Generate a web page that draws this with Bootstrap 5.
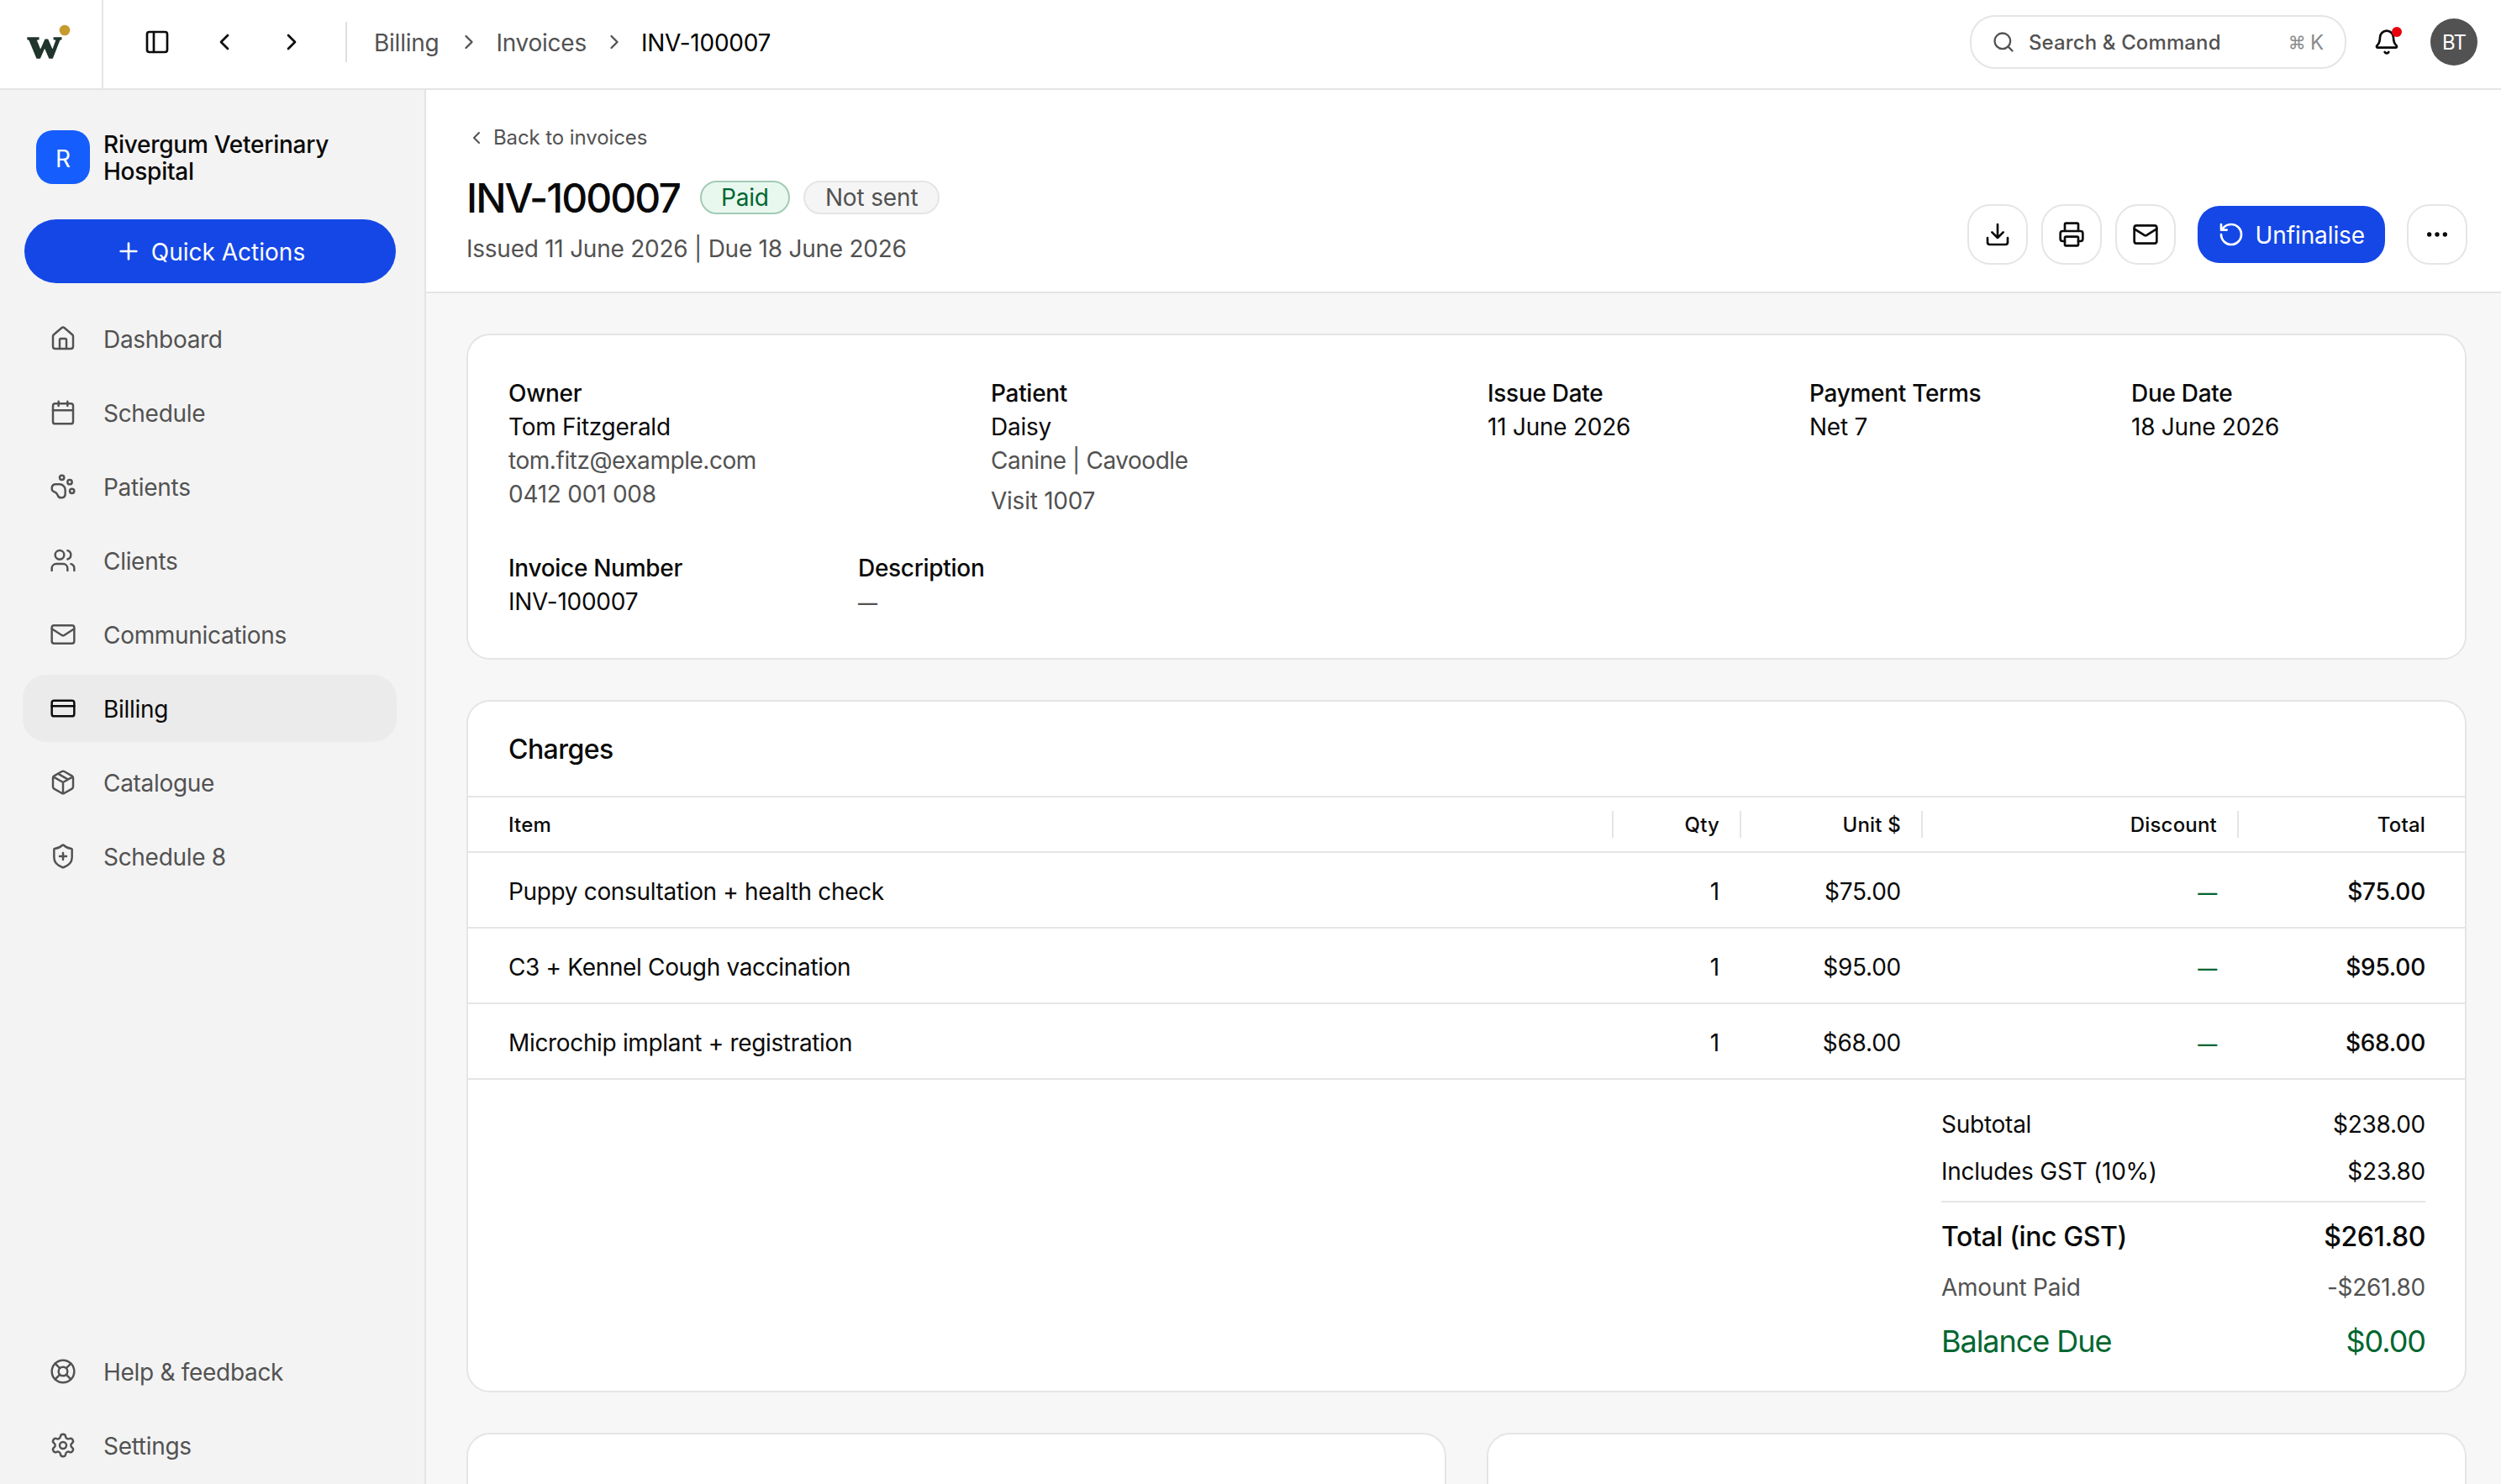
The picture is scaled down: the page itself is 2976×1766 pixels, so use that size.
<!DOCTYPE html>
<html lang="en">
<head>
<meta charset="utf-8">
<meta name="viewport" content="width=device-width, initial-scale=1">
<title>INV-100007</title>
<link rel="stylesheet" href="https://cdn.jsdelivr.net/npm/bootstrap@5.3.0/dist/css/bootstrap.min.css">
<script src="https://cdn.jsdelivr.net/npm/bootstrap@5.3.0/dist/js/bootstrap.bundle.min.js" defer></script>
<style>
:root{--ink:#0a0a0a;--soft:#525252;--line:#e5e5e5;--blue:#1447e6;--green:#016630}
body{font-family:Inter,"Liberation Sans",sans-serif;font-size:28px;line-height:40px;letter-spacing:-.25px;color:var(--ink);background:#f7f7f7}
a{color:inherit;text-decoration:none}
.fw-medium{font-weight:500!important;letter-spacing:-.3px}
.soft{color:var(--soft)}
.green{color:var(--green)}
.tight{letter-spacing:-.45px}
.dash{font-size:23px;font-weight:500;line-height:1}
.ic{width:32px;height:32px;flex:none;fill:none;stroke:currentColor;stroke-width:2;stroke-linecap:round;stroke-linejoin:round}
.ic-sm{width:28px;height:28px}
.ic-xs{width:24px;height:24px}

.topbar{height:107px;border-bottom:2px solid var(--line)}
.brand-cell{width:123px;border-right:2px solid var(--line)}
.brand-cell svg{width:120px;height:104px;display:block}
.tools{padding:0 28px 5px 48px}
.nav-tools{gap:48px}
.crumb-rule{width:2px;height:48px;background:#dedede;margin-left:48px;margin-right:32px}
.crumbs{padding-top:2px}
.crumbs .ic{margin:-2px 18px 0 22px}
.crumbs a+.ic~.ic{margin-left:19px}
.searchbox{width:448px;height:64px;border:2px solid var(--line);border-radius:30px;padding:2px 25px 0 24px;font-size:24px;gap:16px}
.searchbox .fw-medium{letter-spacing:.12px}
.searchbox .ic{margin-top:-2px}
.kbd-hint{color:#8a8a8a;letter-spacing:0;gap:5px}
.kbd-hint span:first-child{font-size:21px}
.bell{margin:0 36px 0 32px}
.bell-dot{position:absolute;width:12px;height:12px;right:-2px;top:-2px;border-radius:50%;background:#e7000b}
.avatar{width:56px;height:56px;background:var(--soft);font-size:24px;letter-spacing:-1px;padding-top:2px}

.sidebar{width:507px;background:#f3f3f3;border-right:2px solid var(--line);padding:48px 33px 6px 27px}
.org{padding-left:16px;gap:16px}
.org-mark{width:64px;height:64px;border-radius:20px;background:#155dfc;padding-top:3px}
.org-name{height:64px;line-height:32px;letter-spacing:-.25px;padding-top:1px}
.btn-blue,.btn-blue:hover{background:var(--blue);color:#fff;border:0}
.quick{height:76px;border-radius:38px;margin:42px 1px 26px 2px;font-size:28px;gap:11px;letter-spacing:0}
.quick span{padding-top:1px}
.side-link{height:80px;border-radius:28px;padding:0 32px;gap:32px;color:var(--soft);letter-spacing:-.3px}
.side-link .ic{stroke-width:1.85;margin-top:-1px}
.side-link span{padding-top:2px}
.side-link.current{background:#ebebeb;color:var(--ink)}
.side-nav{gap:8px}

.page-head{height:242px;border-bottom:2px solid var(--line);padding:0 40px 0 48px}
.back{font-size:24px;gap:8px;padding-top:37px;letter-spacing:-.1px}
.title-row{margin-top:20px}
.inv-title{font-size:48px;line-height:64px;letter-spacing:-1.95px!important;margin:0 24px 0 0}
.pill{height:40px;border-radius:20px;border:2px solid var(--line);background:#f5f5f5;padding:0 24px;line-height:37px;letter-spacing:-.15px;margin-top:-2px}
.pill-paid{border-color:#a3cbb5;background:#e8f8ef;color:var(--green);margin-right:16px;padding:0 23px}
.square{width:72px;height:72px;border:2px solid var(--line);border-radius:27px;background:#fff;color:var(--ink)}
.unfinal{height:68px;border-radius:26px;padding:0 24px;margin:0 10px;font-size:28px;letter-spacing:-.1px;gap:13px}
.unfinal span{padding-top:2px}
.actions{gap:16px;margin-top:136px}

.board{padding:48px 41px 0 48px;gap:48px}
.panel{background:#fff;border:2px solid var(--line);border-radius:28px}
.facts{padding:49px 48px 47px;gap:40px}
.facts-a{display:grid;grid-template-columns:574px 591px 383px 383px 1fr}
.facts-b{display:grid;grid-template-columns:416px 1fr}
.panel-title{font-size:32px;line-height:114px;height:112px;padding:0 48px;margin:0;letter-spacing:-.55px!important}
.charges{table-layout:fixed;border-collapse:separate;border-spacing:0;margin:0;color:var(--ink);border-top:2px solid var(--line)}
.charges th,.charges td{padding:3px 26px 0 48px;border:0;border-bottom:2px solid var(--line);background:none;vertical-align:middle}
.charges td{letter-spacing:-.34px}
.charges td+td{letter-spacing:-.25px}
.charges td+td,.charges th+th{padding-left:0;text-align:right}
.charges td:last-child,.charges th:last-child{padding-right:47px}
.charges th{height:66px;font-size:24px;line-height:32px;font-weight:500;letter-spacing:.2px;padding-top:2px;background:linear-gradient(var(--line),var(--line)) right 0 center/2px 32px no-repeat}
.charges th:last-child{background:none}
.charges td{height:90px}
.totals{width:576px;margin:32px 47px 32px auto;gap:16px}
.totals span{padding-top:1px;margin-bottom:-1px}
.totals hr{margin:0;border:0;height:2px;background:var(--line);opacity:1}
.grand{font-size:32px;line-height:48px;letter-spacing:-.4px!important}
.balance{font-size:36px;line-height:56px;letter-spacing:-1.05px}
.stub{height:300px}
</style>
</head>
<body class="vh-100 overflow-hidden d-flex flex-column">
<svg class="d-none">
  <symbol id="panel" viewBox="0 0 24 24"><rect x="3" y="3" width="18" height="18" rx="2"/><path d="M9 3v18"/></symbol>
  <symbol id="left" viewBox="0 0 24 24"><path d="m15 18-6-6 6-6"/></symbol>
  <symbol id="right" viewBox="0 0 24 24"><path d="m9 18 6-6-6-6"/></symbol>
  <symbol id="search" viewBox="0 0 24 24"><path d="m21 21-4.34-4.34"/><circle cx="11" cy="11" r="8"/></symbol>
  <symbol id="bell" viewBox="0 0 24 24"><path d="M10.268 21a2 2 0 0 0 3.464 0"/><path d="M3.262 15.326A1 1 0 0 0 4 17h16a1 1 0 0 0 .74-1.673C19.41 13.956 18 12.499 18 8A6 6 0 0 0 6 8c0 4.499-1.411 5.956-2.738 7.326"/></symbol>
  <symbol id="plus" viewBox="0 0 24 24"><path d="M5 12h14M12 5v14"/></symbol>
  <symbol id="house" viewBox="0 0 24 24"><path d="M15 21v-8a1 1 0 0 0-1-1h-4a1 1 0 0 0-1 1v8"/><path d="M3 10a2 2 0 0 1 .709-1.528l7-5.999a2 2 0 0 1 2.582 0l7 5.999A2 2 0 0 1 21 10v9a2 2 0 0 1-2 2H5a2 2 0 0 1-2-2z"/></symbol>
  <symbol id="calendar" viewBox="0 0 24 24"><path d="M8 2v4M16 2v4M3 10h18"/><rect x="3" y="4" width="18" height="18" rx="2"/></symbol>
  <symbol id="paw" viewBox="0 0 24 24"><circle cx="11" cy="4" r="2"/><circle cx="18" cy="8" r="2"/><circle cx="20" cy="16" r="2"/><path d="M9 10a5 5 0 0 1 5 5v3.5a3.5 3.5 0 0 1-6.84 1.045Q6.52 17.48 4.46 16.84A3.5 3.5 0 0 1 5.5 10Z"/></symbol>
  <symbol id="users" viewBox="0 0 24 24"><path d="M16 21v-2a4 4 0 0 0-4-4H6a4 4 0 0 0-4 4v2M16 3.128a4 4 0 0 1 0 7.744M22 21v-2a4 4 0 0 0-3-3.87"/><circle cx="9" cy="7" r="4"/></symbol>
  <symbol id="mail" viewBox="0 0 24 24"><rect x="2" y="4" width="20" height="16" rx="2"/><path d="m22 7-8.991 5.727a2 2 0 0 1-2.009 0L2 7"/></symbol>
  <symbol id="card" viewBox="0 0 24 24"><rect x="2" y="5" width="20" height="14" rx="2"/><path d="M2 10h20"/></symbol>
  <symbol id="box" viewBox="0 0 24 24"><path d="M11 21.73a2 2 0 0 0 2 0l7-4A2 2 0 0 0 21 16V8a2 2 0 0 0-1-1.73l-7-4a2 2 0 0 0-2 0l-7 4A2 2 0 0 0 3 8v8a2 2 0 0 0 1 1.73zM12 22V12M3.29 7 12 12l8.71-5M7.5 4.27l9 5.15"/></symbol>
  <symbol id="shield" viewBox="0 0 24 24"><path d="M20 13c0 5-3.5 7.5-7.66 8.95a1 1 0 0 1-.67-.01C7.5 20.5 4 18 4 13V6a1 1 0 0 1 1-1c2 0 4.5-1.2 6.24-2.72a1.17 1.17 0 0 1 1.52 0C14.51 3.81 17 5 19 5a1 1 0 0 1 1 1zM9 12h6M12 9v6"/></symbol>
  <symbol id="buoy" viewBox="0 0 24 24"><circle cx="12" cy="12" r="10"/><circle cx="12" cy="12" r="4"/><path d="m4.93 4.93 4.24 4.24M14.83 9.17l4.24-4.24M14.83 14.83l4.24 4.24M9.17 14.83l-4.24 4.24"/></symbol>
  <symbol id="gear" viewBox="0 0 24 24"><path d="M9.671 4.136a2.34 2.34 0 0 1 4.659 0 2.34 2.34 0 0 0 3.319 1.915 2.34 2.34 0 0 1 2.33 4.033 2.34 2.34 0 0 0 0 3.831 2.34 2.34 0 0 1-2.33 4.033 2.34 2.34 0 0 0-3.319 1.915 2.34 2.34 0 0 1-4.659 0 2.34 2.34 0 0 0-3.32-1.915 2.34 2.34 0 0 1-2.33-4.033 2.34 2.34 0 0 0 0-3.831A2.34 2.34 0 0 1 6.35 6.051a2.34 2.34 0 0 0 3.319-1.915"/><circle cx="12" cy="12" r="3"/></symbol>
  <symbol id="download" viewBox="0 0 24 24"><path d="M12 15V3M21 15v4a2 2 0 0 1-2 2H5a2 2 0 0 1-2-2v-4M7 10l5 5 5-5"/></symbol>
  <symbol id="printer" viewBox="0 0 24 24"><path d="M6 18H4a2 2 0 0 1-2-2v-5a2 2 0 0 1 2-2h16a2 2 0 0 1 2 2v5a2 2 0 0 1-2 2h-2M6 9V3a1 1 0 0 1 1-1h10a1 1 0 0 1 1 1v6"/><rect x="6" y="14" width="12" height="8" rx="1"/></symbol>
  <symbol id="undo" viewBox="0 0 24 24"><path d="M3 12a9 9 0 1 0 9-9 9.75 9.75 0 0 0-6.74 2.74L3 8M3 3v5h5"/></symbol>
  <symbol id="dots" viewBox="0 0 24 24"><circle cx="12" cy="12" r="1"/><circle cx="19" cy="12" r="1"/><circle cx="5" cy="12" r="1"/></symbol>
</svg>

<header class="topbar bg-white d-flex flex-shrink-0">
  <a class="brand-cell flex-shrink-0" href="#">
    <svg viewBox="0 0 120 104"><text x="33" y="68" font-family="Liberation Serif, serif" font-weight="700" font-size="50" fill="#20352c" stroke="#20352c" stroke-width="1.5" letter-spacing="0" textLength="40" lengthAdjust="spacingAndGlyphs">w</text><circle cx="77" cy="36" r="6.3" fill="#c79a2d"/></svg>
  </a>
  <div class="tools d-flex align-items-center flex-grow-1">
    <div class="nav-tools d-flex align-items-center">
      <svg class="ic"><use href="#panel"/></svg>
      <svg class="ic"><use href="#left"/></svg>
      <svg class="ic"><use href="#right"/></svg>
    </div>
    <div class="crumb-rule"></div>
    <nav class="crumbs d-flex align-items-center soft">
      <a href="#">Billing</a><svg class="ic ic-sm"><use href="#right"/></svg><a href="#">Invoices</a><svg class="ic ic-sm"><use href="#right"/></svg><span class="text-black">INV-100007</span>
    </nav>
    <div class="searchbox d-flex align-items-center ms-auto soft">
      <svg class="ic ic-sm"><use href="#search"/></svg>
      <span class="fw-medium flex-grow-1">Search &amp; Command</span>
      <span class="kbd-hint d-flex"><span>⌘</span><span>K</span></span>
    </div>
    <div class="bell position-relative d-flex"><svg class="ic"><use href="#bell"/></svg><span class="bell-dot"></span></div>
    <div class="avatar rounded-circle text-white d-flex align-items-center justify-content-center">BT</div>
  </div>
</header>

<div class="d-flex flex-grow-1 overflow-hidden">
  <aside class="sidebar d-flex flex-column flex-shrink-0">
    <div class="org d-flex">
      <div class="org-mark text-white d-flex align-items-center justify-content-center">R</div>
      <div class="org-name fw-medium">Rivergum Veterinary<br>Hospital</div>
    </div>
    <button class="btn btn-blue quick d-flex align-items-center justify-content-center"><svg class="ic"><use href="#plus"/></svg><span>Quick Actions</span></button>
    <nav class="side-nav d-flex flex-column">
      <a class="side-link d-flex align-items-center" href="#"><svg class="ic"><use href="#house"/></svg><span>Dashboard</span></a>
      <a class="side-link d-flex align-items-center" href="#"><svg class="ic"><use href="#calendar"/></svg><span>Schedule</span></a>
      <a class="side-link d-flex align-items-center" href="#"><svg class="ic"><use href="#paw"/></svg><span>Patients</span></a>
      <a class="side-link d-flex align-items-center" href="#"><svg class="ic"><use href="#users"/></svg><span>Clients</span></a>
      <a class="side-link d-flex align-items-center" href="#"><svg class="ic"><use href="#mail"/></svg><span>Communications</span></a>
      <a class="side-link current d-flex align-items-center" href="#"><svg class="ic"><use href="#card"/></svg><span>Billing</span></a>
      <a class="side-link d-flex align-items-center" href="#"><svg class="ic"><use href="#box"/></svg><span>Catalogue</span></a>
      <a class="side-link d-flex align-items-center" href="#"><svg class="ic"><use href="#shield"/></svg><span>Schedule 8</span></a>
    </nav>
    <nav class="side-nav d-flex flex-column mt-auto">
      <a class="side-link d-flex align-items-center" href="#"><svg class="ic"><use href="#buoy"/></svg><span>Help &amp; feedback</span></a>
      <a class="side-link d-flex align-items-center" href="#"><svg class="ic"><use href="#gear"/></svg><span>Settings</span></a>
    </nav>
  </aside>

  <main class="flex-grow-1 d-flex flex-column">
    <section class="page-head bg-white d-flex justify-content-between flex-shrink-0">
      <div>
        <a class="back soft d-flex align-items-center" href="#"><svg class="ic ic-xs"><use href="#left"/></svg>Back to invoices</a>
        <div class="title-row d-flex align-items-center">
          <h1 class="inv-title fw-medium">INV-100007</h1>
          <span class="pill pill-paid">Paid</span>
          <span class="pill soft">Not sent</span>
        </div>
        <div class="soft mt-2">Issued 11 June 2026 | Due 18 June 2026</div>
      </div>
      <div class="actions d-flex align-items-center align-self-start">
        <button class="btn square p-0 d-flex align-items-center justify-content-center"><svg class="ic"><use href="#download"/></svg></button>
        <button class="btn square p-0 d-flex align-items-center justify-content-center"><svg class="ic"><use href="#printer"/></svg></button>
        <button class="btn square p-0 d-flex align-items-center justify-content-center"><svg class="ic"><use href="#mail"/></svg></button>
        <button class="btn btn-blue unfinal d-flex align-items-center"><svg class="ic"><use href="#undo"/></svg><span>Unfinalise</span></button>
        <button class="btn square p-0 d-flex align-items-center justify-content-center"><svg class="ic"><use href="#dots"/></svg></button>
      </div>
    </section>

    <div class="board d-flex flex-column">
      <section class="panel facts d-flex flex-column">
        <div class="facts-a">
          <div>
            <div class="fw-medium">Owner</div>
            <div>Tom Fitzgerald</div>
            <div class="soft tight">tom.fitz@example.com</div>
            <div class="soft">0412 001 008</div>
          </div>
          <div>
            <div class="fw-medium">Patient</div>
            <div>Daisy</div>
            <div class="soft tight">Canine | Cavoodle</div>
            <div class="soft mt-2">Visit 1007</div>
          </div>
          <div><div class="fw-medium">Issue Date</div><div>11 June 2026</div></div>
          <div><div class="fw-medium">Payment Terms</div><div>Net 7</div></div>
          <div><div class="fw-medium">Due Date</div><div>18 June 2026</div></div>
        </div>
        <div class="facts-b">
          <div><div class="fw-medium">Invoice Number</div><div>INV-100007</div></div>
          <div><div class="fw-medium">Description</div><div class="soft"><span class="dash">—</span></div></div>
        </div>
      </section>

      <section class="panel">
        <h2 class="panel-title fw-medium">Charges</h2>
        <table class="table charges w-100">
          <colgroup><col><col style="width:152px"><col style="width:216px"><col style="width:376px"><col style="width:269px"></colgroup>
          <thead><tr><th>Item</th><th>Qty</th><th>Unit $</th><th>Discount</th><th>Total</th></tr></thead>
          <tbody>
            <tr><td>Puppy consultation + health check</td><td>1</td><td>$75.00</td><td class="green"><span class="dash">—</span></td><td class="fw-medium">$75.00</td></tr>
            <tr><td>C3 + Kennel Cough vaccination</td><td>1</td><td>$95.00</td><td class="green"><span class="dash">—</span></td><td class="fw-medium">$95.00</td></tr>
            <tr><td>Microchip implant + registration</td><td>1</td><td>$68.00</td><td class="green"><span class="dash">—</span></td><td class="fw-medium">$68.00</td></tr>
          </tbody>
        </table>
        <div class="totals d-flex flex-column">
          <div class="d-flex justify-content-between"><span>Subtotal</span><span>$238.00</span></div>
          <div class="d-flex justify-content-between"><span>Includes GST (10%)</span><span>$23.80</span></div>
          <hr>
          <div class="grand fw-medium d-flex justify-content-between"><span>Total (inc GST)</span><span>$261.80</span></div>
          <div class="soft d-flex justify-content-between"><span>Amount Paid</span><span>-$261.80</span></div>
          <div class="balance green d-flex justify-content-between"><span>Balance Due</span><span>$0.00</span></div>
        </div>
      </section>

      <div class="d-flex gap-5">
        <section class="panel stub flex-fill"></section>
        <section class="panel stub flex-fill"></section>
      </div>
    </div>
  </main>
</div>
</body>
</html>
